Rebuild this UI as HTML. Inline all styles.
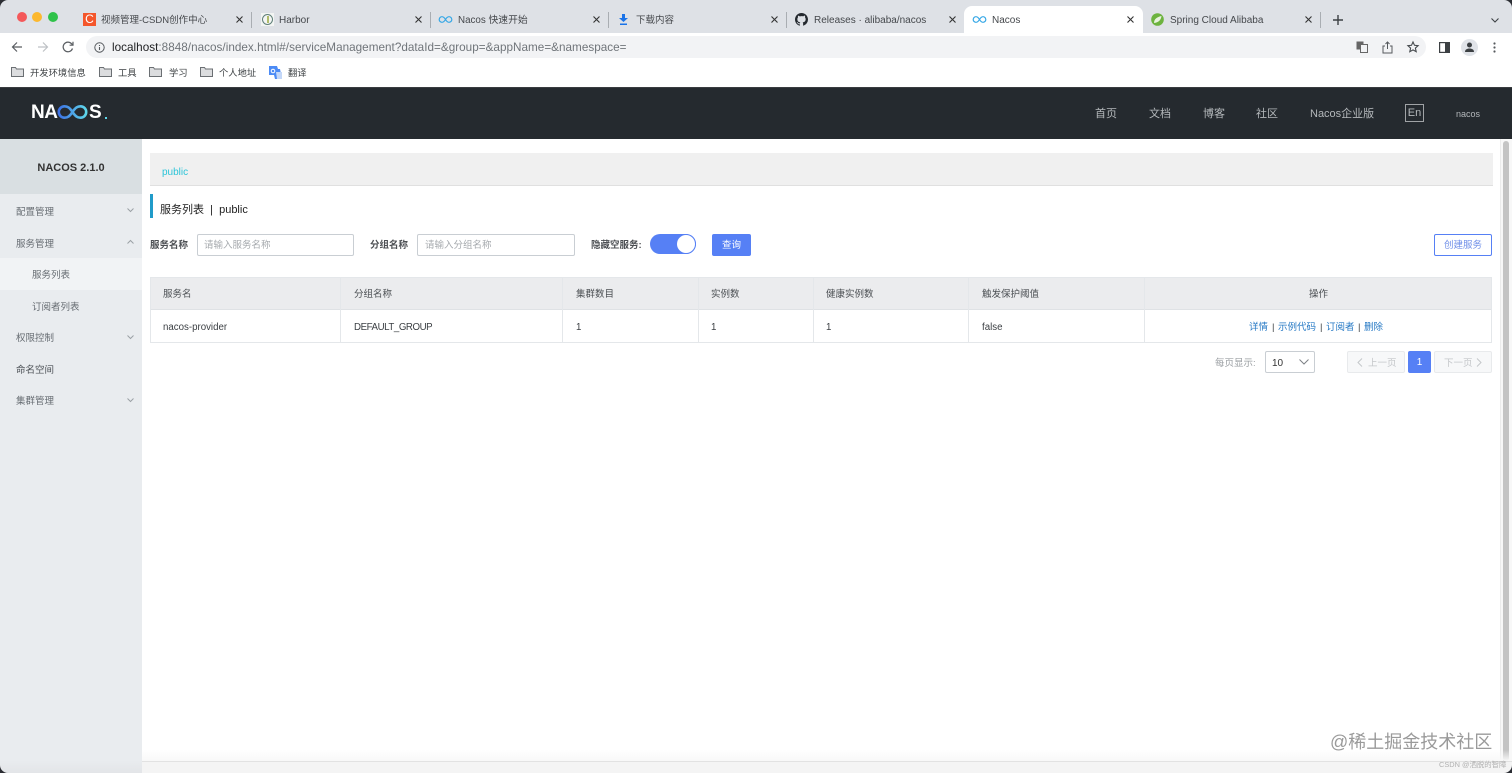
<!DOCTYPE html>
<html lang="zh"><head><meta charset="utf-8"><title>Nacos</title>
<style>
html,body{margin:0;padding:0;width:1512px;height:773px;overflow:hidden;background:#fff}
body{position:relative;font-family:"Liberation Sans","Noto Sans CJK SC",sans-serif;color:#333}
.a,.t{position:absolute}
.t{white-space:nowrap;line-height:16px;font-size:10px;margin-top:2px}
.o1{margin-top:1px}
svg{position:absolute;overflow:visible}
.tab{font-size:10px;color:#45484c}
.tc{font-size:9.500px;color:#45484c}
.b{font-size:9.300px;color:#3c4043;margin-top:1px}
.m{font-size:9.500px;color:#666c72}
.h{font-size:9.500px;color:#4b4f53}
.c{font-size:9.700px;color:#3b3f43}
.n{font-size:11px;color:#b4b8bb}
.l{color:#2578c4;font-size:9.500px}
.s{font-size:9.500px;color:#3b3f43}
.v{position:absolute;top:277px;width:1px;height:65px;background:#e4e7ea}
</style></head><body>

<!-- tab strip -->
<div class="a" style="left:0;top:0;width:1512px;height:33px;background:#dee1e6"></div>
<div class="a" style="left:964px;top:6px;width:179px;height:30px;background:#fff;border-radius:8px 8px 0 0"></div>
<div class="a" style="left:0;top:33px;width:964px;height:3px;background:#fff"></div>
<div class="a" style="left:1143px;top:33px;width:369px;height:3px;background:#fff"></div>
<div class="a" style="left:17px;top:12px;width:10px;height:10px;border-radius:50%;background:#f4585a"></div>
<div class="a" style="left:32px;top:12px;width:10px;height:10px;border-radius:50%;background:#fcb82e"></div>
<div class="a" style="left:48px;top:12px;width:10px;height:10px;border-radius:50%;background:#2fc24a"></div>

<div class="a" style="left:83px;top:13px;width:13px;height:13px;background:#f4562b;color:#fff;font-size:12px;line-height:13px;text-align:center">C</div>
<div class="t tc" style="left:101px;top:11px">视频管理-CSDN创作中心</div>
<svg style="left:236px;top:16px" width="7" height="7" viewBox="0 0 7 7"><path d="M.5.5l6 6M6.500.5l-6 6" stroke="#333" stroke-width="1.100"/></svg>
<div class="a" style="left:251px;top:12px;width:1px;height:16px;background:#a9adb2"></div>

<svg style="left:261px;top:13px" width="13" height="13" viewBox="0 0 13 13"><rect width="13" height="13" fill="#f3f5f3"/><circle cx="6.500" cy="6.500" r="5" fill="none" stroke="#5f7f78" stroke-width="1"/><path d="M7 3v7" stroke="#9aa83c" stroke-width="1.500"/></svg>
<div class="t tab" style="left:279px;top:11px">Harbor</div>
<svg style="left:415px;top:16px" width="7" height="7" viewBox="0 0 7 7"><path d="M.5.5l6 6M6.500.5l-6 6" stroke="#333" stroke-width="1.100"/></svg>
<div class="a" style="left:430px;top:12px;width:1px;height:16px;background:#a9adb2"></div>

<svg style="left:439px;top:16px" width="13" height="7" viewBox="0 0 13 7"><path d="M6.500 3.500C5 1 4 .7 3 .7a2.800 2.800 0 0 0 0 5.600c1 0 2-.3 3.500-2.800S9 .7 10 .7a2.800 2.800 0 0 1 0 5.600c-1 0-2-.3-3.500-2.800" fill="none" stroke="#35a7e6" stroke-width="1.200"/></svg>
<div class="t" style="left:458px;top:11px;font-size:9.800px;color:#45484c">Nacos 快速开始</div>
<svg style="left:593px;top:16px" width="7" height="7" viewBox="0 0 7 7"><path d="M.5.5l6 6M6.500.5l-6 6" stroke="#333" stroke-width="1.100"/></svg>
<div class="a" style="left:608px;top:12px;width:1px;height:16px;background:#a9adb2"></div>

<svg style="left:619px;top:14px" width="9" height="11" viewBox="0 0 9 11"><path d="M3 0h3v4h3L4.500 8 0 4h3zM1 9.500h7V11H1z" fill="#1a73e8"/></svg>
<div class="t tc" style="left:636px;top:11px">下载内容</div>
<svg style="left:771px;top:16px" width="7" height="7" viewBox="0 0 7 7"><path d="M.5.5l6 6M6.500.5l-6 6" stroke="#333" stroke-width="1.100"/></svg>
<div class="a" style="left:786px;top:12px;width:1px;height:16px;background:#a9adb2"></div>

<svg style="left:795px;top:13px" width="13" height="13" viewBox="0 0 16 16"><path fill="#24292f" d="M8 0C3.580 0 0 3.580 0 8c0 3.540 2.290 6.530 5.470 7.590.4.070.55-.17.550-.38v-1.340c-2.230.48-2.700-1.070-2.700-1.070-.36-.92-.89-1.170-.89-1.170-.73-.5.050-.49.050-.49.800.06 1.230.83 1.230.83.710 1.220 1.870.87 2.330.66.070-.52.280-.87.510-1.070-1.780-.2-3.640-.89-3.640-3.950 0-.87.310-1.590.820-2.150-.08-.2-.36-1.020.08-2.120 0 0 .67-.21 2.200.82A7.600 7.600 0 0 1 8 3.870c.68 0 1.360.09 2 .27 1.530-1.040 2.200-.82 2.200-.82.44 1.100.16 1.920.08 2.120.51.560.82 1.270.82 2.150 0 3.070-1.870 3.750-3.650 3.950.29.250.54.730.54 1.480v2.200c0 .21.150.46.550.38A8.010 8.010 0 0 0 16 8c0-4.420-3.580-8-8-8z"/></svg>
<div class="t tab" style="left:814px;top:11px">Releases · alibaba/nacos</div>
<svg style="left:949px;top:16px" width="7" height="7" viewBox="0 0 7 7"><path d="M.5.5l6 6M6.500.5l-6 6" stroke="#333" stroke-width="1.100"/></svg>

<svg style="left:973px;top:16px" width="13" height="7" viewBox="0 0 13 7"><path d="M6.500 3.500C5 1 4 .7 3 .7a2.800 2.800 0 0 0 0 5.600c1 0 2-.3 3.500-2.800S9 .7 10 .7a2.800 2.800 0 0 1 0 5.600c-1 0-2-.3-3.500-2.800" fill="none" stroke="#35a7e6" stroke-width="1.200"/></svg>
<div class="t tab" style="left:992px;top:11px">Nacos</div>
<svg style="left:1127px;top:16px" width="7" height="7" viewBox="0 0 7 7"><path d="M.5.5l6 6M6.500.5l-6 6" stroke="#333" stroke-width="1.100"/></svg>

<svg style="left:1151px;top:13px" width="13" height="13" viewBox="0 0 13 13"><circle cx="6.500" cy="6.500" r="6.300" fill="#6db33f"/><path d="M3 10C3 6 6 4 10.500 3 10 7 7.500 9.500 3 10z" fill="#e8f3de"/></svg>
<div class="t tab" style="left:1170px;top:11px">Spring Cloud Alibaba</div>
<svg style="left:1305px;top:16px" width="7" height="7" viewBox="0 0 7 7"><path d="M.5.5l6 6M6.500.5l-6 6" stroke="#333" stroke-width="1.100"/></svg>
<div class="a" style="left:1320px;top:12px;width:1px;height:16px;background:#a9adb2"></div>
<svg style="left:1333px;top:15px" width="10" height="10" viewBox="0 0 10 10"><path d="M5 0v10M0 5h10" stroke="#3c4043" stroke-width="1.400"/></svg>
<svg style="left:1491px;top:18px" width="8" height="5" viewBox="0 0 8 5"><path d="M.5.500L4 4 7.500.5" fill="none" stroke="#3c4043" stroke-width="1.100"/></svg>

<!-- toolbar -->
<div class="a" style="left:86px;top:36px;width:1340px;height:22px;background:#f2f3f5;border-radius:11px"></div>
<svg style="left:11px;top:41px" width="12" height="12" viewBox="0 0 12 12"><path d="M11 6H1.500M6 1.500L1.500 6 6 10.500" fill="none" stroke="#5a5e62" stroke-width="1.200"/></svg>
<svg style="left:37px;top:41px" width="12" height="12" viewBox="0 0 12 12"><path d="M1 6h9.500M6 1.500L10.500 6 6 10.500" fill="none" stroke="#bdc1c5" stroke-width="1.200"/></svg>
<svg style="left:62px;top:41px" width="12" height="12" viewBox="0 0 12 12"><path d="M10.500 7.500A4.800 4.800 0 1 1 9.500 2.700L11 4.200M11 .8v3.400H7.600" fill="none" stroke="#5a5e62" stroke-width="1.200"/></svg>
<svg style="left:94px;top:42px" width="11" height="11" viewBox="0 0 11 11"><circle cx="5.500" cy="5.500" r="4.700" fill="none" stroke="#55595d" stroke-width="1"/><path d="M5.500 5v3M5.500 3v1" stroke="#55595d" stroke-width="1.100"/></svg>
<div class="t o1" style="left:112px;top:39px;font-size:11.700px;letter-spacing:.03px;color:#70757a"><span style="color:#202124">localhost</span>:8848/nacos/index.html#/serviceManagement?dataId=&amp;group=&amp;appName=&amp;namespace=</div>

<svg style="left:1356px;top:41px" width="12" height="12" viewBox="0 0 12 12"><rect x=".5" y=".5" width="7" height="8" fill="#666"/><rect x="4.500" y="3.500" width="7" height="8" fill="#f2f3f5" stroke="#666"/></svg>
<svg style="left:1382px;top:41px" width="11" height="13" viewBox="0 0 11 13"><path d="M3 5H1v7h9V5H8M5.500 8V1M3.500 3l2-2 2 2" fill="none" stroke="#55595d" stroke-width="1"/></svg>
<svg style="left:1407px;top:41px" width="12" height="12" viewBox="0 0 12 12"><path d="M6 1l1.500 3.300 3.600.4-2.700 2.400.8 3.600L6 8.900l-3.200 1.800.8-3.600L.9 4.700l3.600-.4z" fill="none" stroke="#45494d" stroke-width="1.100"/></svg>
<svg style="left:1439px;top:42px" width="11" height="11" viewBox="0 0 11 11"><rect x=".6" y=".6" width="9.800" height="9.800" fill="#fff" stroke="#3c4043" stroke-width="1.200"/><rect x="6" y="1" width="4" height="9" fill="#3c4043"/></svg>
<div class="a" style="left:1461px;top:39px;width:17px;height:17px;border-radius:50%;background:#e0e3e8"></div>
<svg style="left:1464px;top:42px" width="11" height="11" viewBox="0 0 11 11"><circle cx="5.500" cy="3" r="2.500" fill="#3c4043"/><path d="M1 10c0-2.500 2-3.500 4.500-3.500S10 7.500 10 10z" fill="#3c4043"/></svg>
<svg style="left:1493px;top:42px" width="3" height="11" viewBox="0 0 3 11"><circle cx="1.500" cy="1.500" r="1.100" fill="#55595d"/><circle cx="1.500" cy="5.500" r="1.100" fill="#55595d"/><circle cx="1.500" cy="9.500" r="1.100" fill="#55595d"/></svg>

<!-- bookmarks -->
<svg style="left:11px;top:67px" width="13" height="10" viewBox="0 0 13 10"><path d="M.5 9.500V.5h4l1 1.500h7v7.500z" fill="#dcdddf" stroke="#6b6f73"/></svg>
<div class="t b" style="left:30px;top:64px">开发环境信息</div>
<svg style="left:99px;top:67px" width="13" height="10" viewBox="0 0 13 10"><path d="M.5 9.500V.5h4l1 1.500h7v7.500z" fill="#dcdddf" stroke="#6b6f73"/></svg>
<div class="t b" style="left:118px;top:64px">工具</div>
<svg style="left:149px;top:67px" width="13" height="10" viewBox="0 0 13 10"><path d="M.5 9.500V.5h4l1 1.500h7v7.500z" fill="#dcdddf" stroke="#6b6f73"/></svg>
<div class="t b" style="left:169px;top:64px">学习</div>
<svg style="left:200px;top:67px" width="13" height="10" viewBox="0 0 13 10"><path d="M.5 9.500V.5h4l1 1.500h7v7.500z" fill="#dcdddf" stroke="#6b6f73"/></svg>
<div class="t b" style="left:219px;top:64px">个人地址</div>
<svg style="left:269px;top:66px" width="13" height="13" viewBox="0 0 13 13"><path d="M0 0h8l1 3h2v0l2 10H6L5 9H0z" fill="#4c8bf5"/><path d="M7 6h6v7H8z" fill="#c3d7f8"/><circle cx="4" cy="5" r="1.800" fill="none" stroke="#fff"/></svg>
<div class="t b" style="left:288px;top:64px">翻译</div>

<!-- header -->
<div class="a" style="left:0;top:87px;width:1512px;height:52px;background:#252a2f;border-top:1px solid #3a3d40;box-sizing:border-box"></div>
<div class="t" style="left:31px;top:102px;margin:0;font-size:19px;line-height:22px;font-weight:bold;color:#fff;letter-spacing:-.5px">NA</div>
<svg style="left:57px;top:105px" width="31" height="14" viewBox="0 0 31 14"><defs><linearGradient id="g" x1="0" x2="1" y1="0" y2="0"><stop offset="0" stop-color="#3d72e6"/><stop offset="1" stop-color="#5fd7ea"/></linearGradient></defs><path d="M15.500 7C12.500 2.500 10.500 1.300 7.500 1.300a5.700 5.700 0 0 0 0 11.400c3 0 5-1.200 8-5.700s5-5.700 8-5.700a5.700 5.700 0 0 1 0 11.400c-3 0-5-1.200-8-5.700" fill="none" stroke="url(#g)" stroke-width="2.600"/></svg>
<div class="t" style="left:89px;top:102px;margin:0;font-size:19px;line-height:22px;font-weight:bold;color:#fff">S</div>
<div class="a" style="left:105px;top:117px;width:2px;height:2px;background:#5fd7ea"></div>

<div class="t n o1" style="left:1095px;top:105px">首页</div>
<div class="t n o1" style="left:1149px;top:105px">文档</div>
<div class="t n o1" style="left:1203px;top:105px">博客</div>
<div class="t n o1" style="left:1256px;top:105px">社区</div>
<div class="t n o1" style="left:1310px;top:105px">Nacos企业版</div>
<div class="a" style="left:1405px;top:104px;width:19px;height:18px;border:1px solid #a0a3a6;box-sizing:border-box;color:#b4b8bb;font-size:11px;line-height:16px;text-align:center">En</div>
<div class="t o1" style="left:1456px;top:105px;font-size:9px;color:#b4b8bb">nacos</div>

<!-- sidebar -->
<div class="a" style="left:0;top:139px;width:142px;height:634px;background:linear-gradient(#e9ecef 0,#e9ecef 98%,#e3e5e8 100%);border-radius:0 0 0 8px"></div>
<div class="a" style="left:0;top:139px;width:142px;height:55px;background:#d9dfe2"></div>
<div class="t o1" style="left:0;top:159px;width:142px;text-align:center;font-size:11px;font-weight:bold;color:#333">NACOS 2.1.0</div>
<div class="a" style="left:0;top:258px;width:142px;height:32px;background:#f1f3f5"></div>
<div class="t m" style="left:16px;top:203px">配置管理</div>
<div class="t m" style="left:16px;top:235px">服务管理</div>
<div class="t m" style="left:32px;top:266px">服务列表</div>
<div class="t m" style="left:32px;top:298px">订阅者列表</div>
<div class="t m" style="left:16px;top:329px">权限控制</div>
<div class="t m" style="left:16px;top:361px;color:#4a4f54">命名空间</div>
<div class="t m" style="left:16px;top:392px">集群管理</div>
<svg style="left:127px;top:208px" width="7" height="4" viewBox="0 0 7 4"><path d="M.5.500L3.500 3.500 6.500.5" fill="none" stroke="#9ba1a6"/></svg>
<svg style="left:127px;top:240px" width="7" height="4" viewBox="0 0 7 4"><path d="M.5 3.500L3.500.5 6.500 3.500" fill="none" stroke="#9ba1a6"/></svg>
<svg style="left:127px;top:335px" width="7" height="4" viewBox="0 0 7 4"><path d="M.5.500L3.500 3.500 6.500.5" fill="none" stroke="#9ba1a6"/></svg>
<svg style="left:127px;top:398px" width="7" height="4" viewBox="0 0 7 4"><path d="M.5.500L3.500 3.500 6.500.5" fill="none" stroke="#9ba1a6"/></svg>

<!-- namespace bar -->
<div class="a" style="left:150px;top:153px;width:1343px;height:33px;background:#f0f0f0;border-bottom:1px solid #e0e0e0;box-sizing:border-box"></div>
<div class="t" style="left:162px;top:163px;color:#2bc4d8">public</div>

<!-- title -->
<div class="a" style="left:150px;top:194px;width:3px;height:24px;background:#209bc9"></div>
<div class="t o1" style="left:160px;top:201px;font-size:11px;color:#222">服务列表&nbsp;&nbsp;|&nbsp;&nbsp;public</div>

<!-- filters -->
<div class="t o1" style="left:150px;top:237px;color:#4c4f53;font-weight:bold;font-size:9.500px">服务名称</div>
<div class="a" style="left:197px;top:234px;width:157px;height:22px;border:1px solid #c9ced3;border-radius:2px;box-sizing:border-box"></div>
<div class="t" style="left:204px;top:236px;color:#a5a9ad;font-size:9.500px">请输入服务名称</div>
<div class="t o1" style="left:370px;top:237px;color:#4c4f53;font-weight:bold;font-size:9.500px">分组名称</div>
<div class="a" style="left:417px;top:234px;width:158px;height:22px;border:1px solid #c9ced3;border-radius:2px;box-sizing:border-box"></div>
<div class="t" style="left:425px;top:236px;color:#a5a9ad;font-size:9.500px">请输入分组名称</div>
<div class="t o1" style="left:591px;top:237px;color:#4c4f53;font-weight:bold;font-size:9.500px">隐藏空服务:</div>
<div class="a" style="left:650px;top:234px;width:46px;height:20px;background:#5680f5;border-radius:10px"></div>
<div class="a" style="left:676px;top:234px;width:20px;height:20px;background:#fff;border:1px solid #5680f5;border-radius:50%;box-sizing:border-box"></div>
<div class="a" style="left:712px;top:234px;width:39px;height:22px;background:#5680f5;border-radius:2px;color:#fff;font-size:9.500px;line-height:23px;text-align:center">查询</div>
<div class="a" style="left:1434px;top:234px;width:58px;height:22px;border:1px solid #5680f5;border-radius:2px;box-sizing:border-box;color:#6f8fe8;font-size:9.500px;line-height:21px;text-align:center">创建服务</div>

<!-- table -->
<div class="a" style="left:150px;top:277px;width:1342px;height:66px;border:1px solid #e4e7ea;box-sizing:border-box"></div>
<div class="a" style="left:151px;top:278px;width:1340px;height:32px;background:#ebecee;border-bottom:1px solid #dfe2e5;box-sizing:border-box"></div>
<div class="v" style="left:340px"></div><div class="v" style="left:562px"></div><div class="v" style="left:698px"></div>
<div class="v" style="left:813px"></div><div class="v" style="left:968px"></div><div class="v" style="left:1144px"></div>

<div class="t h" style="left:163px;top:285px">服务名</div>
<div class="t h" style="left:354px;top:285px">分组名称</div>
<div class="t h" style="left:576px;top:285px">集群数目</div>
<div class="t h" style="left:711px;top:285px">实例数</div>
<div class="t h" style="left:826px;top:285px">健康实例数</div>
<div class="t h" style="left:982px;top:285px">触发保护阈值</div>
<div class="t h" style="left:1309px;top:285px">操作</div>

<div class="t c" style="left:163px;top:318px">nacos-provider</div>
<div class="t c" style="left:354px;top:318px;letter-spacing:-.43px">DEFAULT_GROUP</div>
<div class="t c" style="left:576px;top:318px">1</div>
<div class="t c" style="left:711px;top:318px">1</div>
<div class="t c" style="left:826px;top:318px">1</div>
<div class="t c" style="left:982px;top:318px">false</div>
<div class="t l" style="left:1249px;top:318px">详情</div>
<div class="t s" style="left:1272px;top:318px">|</div>
<div class="t l" style="left:1278px;top:318px">示例代码</div>
<div class="t s" style="left:1320px;top:318px">|</div>
<div class="t l" style="left:1326px;top:318px">订阅者</div>
<div class="t s" style="left:1358px;top:318px">|</div>
<div class="t l" style="left:1364px;top:318px">删除</div>

<!-- pagination -->
<div class="t" style="left:1215px;top:354px;color:#9a9ea2;font-size:9.500px">每页显示:</div>
<div class="a" style="left:1265px;top:351px;width:50px;height:22px;border:1px solid #c9ced3;border-radius:2px;box-sizing:border-box"></div>
<div class="t" style="left:1272px;top:354px;color:#333">10</div>
<svg style="left:1299px;top:359px" width="10" height="6" viewBox="0 0 10 6"><path d="M.5.500L5 5 9.500.5" fill="none" stroke="#7d8185"/></svg>
<div class="a" style="left:1347px;top:351px;width:58px;height:22px;background:#f7f8f9;border:1px solid #e8eaec;border-radius:2px;box-sizing:border-box"></div>
<svg style="left:1357px;top:358px" width="6" height="9" viewBox="0 0 6 9"><path d="M5 .5L1 4.500 5 8.500" fill="none" stroke="#c4c7ca"/></svg>
<div class="t" style="left:1368px;top:354px;color:#c4c7ca;font-size:9.500px">上一页</div>
<div class="a" style="left:1408px;top:351px;width:23px;height:22px;background:#5680f5;border-radius:2px;color:#fff;font-size:10px;line-height:23px;text-align:center">1</div>
<div class="a" style="left:1434px;top:351px;width:58px;height:22px;background:#f7f8f9;border:1px solid #e8eaec;border-radius:2px;box-sizing:border-box"></div>
<div class="t" style="left:1444px;top:354px;color:#c4c7ca;font-size:9.500px">下一页</div>
<svg style="left:1476px;top:358px" width="6" height="9" viewBox="0 0 6 9"><path d="M1 .5L5 4.500 1 8.500" fill="none" stroke="#c4c7ca"/></svg>

<!-- scrollbars -->
<div class="a" style="left:1500px;top:139px;width:12px;height:634px;background:#f8f8f8;border-left:1px solid #ececec;box-sizing:border-box"></div>
<div class="a" style="left:1503px;top:141px;width:6px;height:620px;background:#c4c4c4;border-radius:3px"></div>
<div class="a" style="left:142px;top:750px;width:1370px;height:11px;background:linear-gradient(rgba(246,246,246,0),#f8f8f8)"></div>
<div class="a" style="left:142px;top:761px;width:1370px;height:12px;background:#f4f4f4;border-top:1px solid #e2e2e2;box-sizing:border-box"></div>

<!-- window corners -->
<svg style="left:0;top:0" width="8" height="8" viewBox="0 0 8 8"><path d="M0 0h8a8 8 0 0 0-8 8z" fill="#2b2d33"/></svg>
<svg style="left:1504px;top:0" width="8" height="8" viewBox="0 0 8 8"><path d="M0 0h8v8a8 8 0 0 0-8-8z" fill="#2b2d33"/></svg>
<svg style="left:0;top:765px" width="8" height="8" viewBox="0 0 8 8"><path d="M0 0v8h8a8 8 0 0 1-8-8z" fill="#2b2d33"/></svg>
<svg style="left:1504px;top:765px" width="8" height="8" viewBox="0 0 8 8"><path d="M8 0v8H0a8 8 0 0 0 8-8z" fill="#2b2d33"/></svg>

<!-- watermarks -->
<div class="t" style="left:1330px;top:731px;margin:0;font-size:18px;line-height:22px;color:#9a9a9a">@稀土掘金技术社区</div>
<div class="t" style="left:1439px;top:759px;margin:0;font-size:7.400px;line-height:12px;color:#b0b0b0">CSDN @洒脱的智障</div>
</body></html>
